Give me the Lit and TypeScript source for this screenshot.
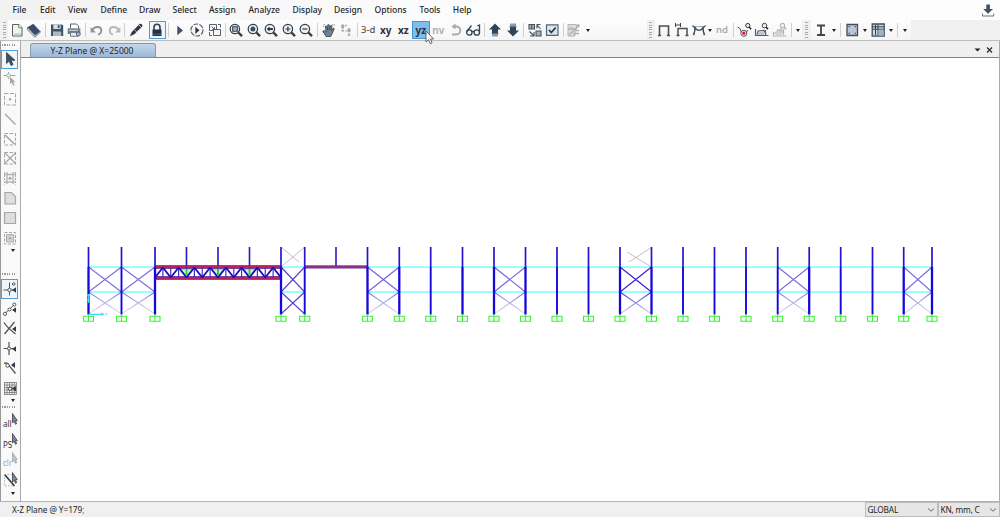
import { LitElement, html, svg, css } from "lit";
import { customElement } from "lit/decorators.js";

const N = "#343c47";
const G = "#a4a6a8";

const lens = (inner: unknown) => svg`
  <circle cx="6.9" cy="7" r="4.7" fill="#eceff2" stroke=${N} stroke-width="1.2"/>
  <path d="M10.4 10.5L14 14.1" stroke=${N} stroke-width="2.4"/>${inner}`;

const snap = (body: unknown) => svg`<g fill="none" stroke="#555" stroke-width="1">${body}</g>
  <path d="M10 9l4-2.8v5.6z" fill="#2c3d50"/>`;

const select = svg`<path d="M10.500 .5v9.500l1.700-1.700 1.300 3 1.200-.7-1.300-2.900h1.900z" fill="#7b8792" stroke="#34404c" stroke-width=".8"/>`;

const ICONS: Record<string, unknown> = {
  new: svg`<path d="M3.500 2.500h6.500l3 3v8.500h-9.500z" fill="#edf3ed" stroke="#59615d"/><path d="M9.700 2.500v3.300h3.300" fill="#fff" stroke="#59615d" stroke-width=".8"/><path d="M5 12.500h7" stroke="#b8cdbf" stroke-width="2"/>`,
  book: svg`<path d="M1.500 5.200L7.300 1.800l7 7.400-5.200 4.800z" fill="#3b4a67"/><path d="M1.500 5.200v2.600l7.300 7.500 5.500-4.900V9.200L9 13.200z" fill="#c3c8cf" stroke="#586476" stroke-width=".7"/>`,
  save: svg`<path d="M2 2.500h11l1.200 1.200v10.300H2z" fill="#425365"/><path d="M4.300 2.500h7.300v4.500H4.300z" fill="#d6dde3"/><path d="M8.800 3h1.700v3H8.800z" fill="#425365"/><path d="M4 9.500h8.200V14H4z" fill="#aeb8c3"/>`,
  print: svg`<path d="M4.500 6V2h6l2 2v2.500" fill="#fff" stroke="#56606d"/><path d="M1.700 6.300h12.600v5.700H1.700z" fill="#727f8f"/><path d="M3 8.300h9" stroke="#d8dde3"/><path d="M4.500 10.300h7.300v4H4.500z" fill="#e6eaee" stroke="#56606d" stroke-width=".8"/><circle cx="12.300" cy="12" r="2" fill="#a9b5c6" stroke="#465263" stroke-width=".8"/>`,
  undo: svg`<path d="M3 8.500C5.500 3.500 12.300 4 12.300 8.500c0 2.300-1.700 3.700-3.300 4" fill="none" stroke="#92969a" stroke-width="1.900"/><path d="M1.600 5v5.500h5.300z" fill="#92969a"/>`,
  redo: svg`<path d="M13 8.500C10.500 3.500 3.700 4 3.700 8.500c0 2.300 1.700 3.700 3.300 4" fill="none" stroke="#b5b8ba" stroke-width="1.900"/><path d="M14.400 5v5.500H9.100z" fill="#b5b8ba"/>`,
  pen: svg`<path d="M1.800 14.200l2-4.300L11.600 2c1.800-.6 3.200.7 2.600 2.500l-7.900 7.700z" fill="#2d3743"/><path d="M6.500 7.800l2 2M10.200 2.200l3.500 3.600" stroke="#d5dae0" stroke-width=".9"/>`,
  lock: svg`<path d="M5 8V5.300a3 3 0 0 1 6 0V8" fill="none" stroke="#333c4b" stroke-width="1.600"/><path d="M3.500 7.500h9v6.500h-9z" fill="#27313f"/><path d="M4 12.200h8" stroke="#596b82"/>`,
  run: svg`<path d="M5.300 3.800l5.700 4.700-5.700 4.700z" fill="#3f5068"/>`,
  runset: svg`<circle cx="8" cy="8" r="6" fill="none" stroke="#5a616a" stroke-width="1.200" stroke-dasharray="4.700 1.300"/><path d="M6.300 4.700l4.200 3.600-4.200 3.600z" fill="#2d3a49"/>`,
  alive: svg`<g fill="#f5f5f5" stroke="#59606a"><path d="M2.500 2.500h7v6h-7z"/><path d="M6.500 7.500h7v6h-7z"/></g><path d="M2.500 10v3.500h2.500M11 2.500h2.500v3M4.500 4.500l3 3m-2.200 0h2.200V5.300" fill="none" stroke="#59606a"/>`,
  zwin: lens(svg`<path d="M4.700 4.700h4.600v4.600H4.700z" fill="#aab4c0" stroke="#394450" stroke-width="1.100"/>`),
  zfull: lens(svg`<circle cx="6.900" cy="7" r="2.500" fill="#3d4d5c"/>`),
  zprev: lens(svg`<path d="M3.600 7l3-2.600v1.700h3.300v1.800H6.600v1.700z" fill="#2c3c4c"/>`),
  zin: lens(svg`<path d="M4.400 7h5M6.900 4.500v5" stroke=${N} stroke-width="1.200"/>`),
  zout: lens(svg`<path d="M4.400 7h5" stroke=${N} stroke-width="1.200"/>`),
  hand: svg`<path d="M2.500 5V2.500H5M11 2.500h2.500V5" fill="none" stroke="#aaa" stroke-dasharray="1.500 1"/><path d="M5 14.500L1.800 9.200l1.300-.7 2 1.700-.8-6 1.300-.3 1 4.100.2-5.200h1.400l.4 5 1.100-4.400 1.300.3-.6 5 1.700-2.600 1.200.6-2.200 5.100-1.300 2.700z" fill="#6f8193" stroke="#34414f" stroke-width=".8"/>`,
  feet: svg`<g fill="#a6a8aa"><ellipse cx="4.700" cy="4.500" rx="1.700" ry="2.200"/><ellipse cx="4.700" cy="8.700" rx="1.300" ry="1.100"/><ellipse cx="11" cy="8.300" rx="1.700" ry="2.200"/><ellipse cx="11" cy="12.700" rx="1.300" ry="1.300"/><circle cx="8" cy="3.500" r=".9"/><circle cx="8" cy="9" r=".8"/></g>`,
  rotate: svg`<path d="M5.500 4.500h2.800a4 4 0 0 1 0 8H4" fill="none" stroke="#aaa" stroke-width="1.900"/><path d="M7.500 1.500v6L3.500 4.500z" fill="#aaa"/>`,
  glasses: svg`<g fill="none" stroke="#374351" stroke-width="1.300"><circle cx="4.300" cy="10.500" r="2.700"/><circle cx="11.800" cy="10.500" r="2.700"/><path d="M7 10c.7-.8 1.400-.8 2.100 0M1.800 9.500L6.500 3.500M14.500 10.500V3l-2.200 1"/></g>`,
  up: svg`<path d="M8 1.500l6 6h-3V11H5V7.500H2z" fill="#2f4359"/><path d="M5 11h6v3.500H5z" fill="#8d9dae"/><path d="M4.500 11.500h7" stroke="#5d7187"/>`,
  down: svg`<path d="M5 1.500h6V5H5z" fill="#8d9dae"/><path d="M5 5h6v3.500h3l-6 6-6-6h3z" fill="#2f4359"/><path d="M4.500 4.700h7" stroke="#5d7187"/>`,
  shrink: svg`<g fill="#a9b3bf" stroke="#48525f" stroke-width="1.100"><path d="M2 2.500h5.500v4.500H2zM9 9h5v5H9z"/></g><path d="M4.700 2.500v4.500M9.500 2.500h4M10 2.500v4M10 3l3.500 4M2.500 9.500l4 4M3 14h4v-4" fill="none" stroke="#48525f" stroke-width="1.100"/>`,
  check: svg`<path d="M2.500 2.800h11.500v10.500H2.500z" fill="#dce4ed" stroke="#536579" stroke-width="1.200"/><path d="M5 8l2.300 2.500 4.400-5" fill="none" stroke="#27384a" stroke-width="1.700"/>`,
  assign: svg`<path d="M2 2.500h8.500v4.500H2zM2 7h7v7H2z" fill="#dcdddd" stroke="#b2b3b4"/><path d="M3 13L13 3.500M4.500 5l2 1.500M9 8.500h4M7 11.500h6" stroke="#b0b0b0" stroke-width="1.300"/><circle cx="12.500" cy="3.500" r="1.300" fill="#aaa"/>`,
  frame: svg`<path d="M2 13.500h3M11 13.500h3M3.500 13V4h9v9" fill="none" stroke="#4b4f54" stroke-width="1.600"/>`,
  frameload: svg`<path d="M2.500 13.500h3M11.500 13.500h3M4 13.500V6.500h9v7" fill="none" stroke="#4b4f54" stroke-width="1.500"/><path d="M1.500 1v4M1.500 3h5M6.500 1v4" fill="none" stroke="#3b4045"/>`,
  deform: svg`<path d="M3.500 13.500V4.500h9v9" fill="none" stroke="#a9adb2"/><path d="M1.500 3.500c1 2 2 1 2.300 2.500.5 2-.5 5-1.500 7M3.800 5c2 4.500 6.500 4.500 8.500 0M14.500 3.500c-1 2-2 1-2.300 2.500-.5 2 .5 5 1.500 7" fill="none" stroke="#405064" stroke-width="1.400"/>`,
  plot1: svg`<path d="M1.500 5l2.500 1.500L6 12h4l1.500-4" fill="none" stroke="#4d5a68"/><circle cx="7.800" cy="11.300" r="3" fill="#fff" stroke="#48505a"/><circle cx="7.800" cy="11.300" r="1.700" fill="#e31d37"/><circle cx="11.800" cy="3.500" r="2.100" fill="#e7edf3" stroke="#333"/><path d="M13.200 5.200l2 2" stroke="#222" stroke-width="1.500"/>`,
  plot2: svg`<path d="M1.500 7v6.500h13M3 12l1.500-3 5.500-.7 2 4M4 13V8.500M11.500 8v5.500" fill="none" stroke="#4f5f72" stroke-width="1.200"/><path d="M4 10h6v3H4z" fill="#bac5d1"/><circle cx="10.500" cy="3.600" r="2.300" fill="#e7edf3" stroke="#444"/><path d="M12.200 5.300l1.800 1.800" stroke="#222" stroke-width="1.500"/>`,
  plot3: svg`<path d="M1.500 10v4h13M3 12l2-3 4-1 3 4M6 7v6M9 6v7M11.500 7v6" fill="none" stroke="#b0b2b3" stroke-width="1.200"/><path d="M4 9h6v4H4z" fill="#d0d1d2"/><circle cx="10.500" cy="3.600" r="2.300" fill="#eee" stroke="#aaa"/><path d="M12.200 5.300l1.800 1.800" stroke="#aaa" stroke-width="1.500"/>`,
  ibeam: svg`<path d="M4 3.500h8M4 13h8M8 3.500V13" stroke="#41464b" stroke-width="1.800"/>`,
  rebar: svg`<path d="M3 2.500h10.500v11H3z" fill="#b9c6d6" stroke="#444d58" stroke-width="1.300"/><g fill="#445a78"><circle cx="5.200" cy="4.700" r=".8"/><circle cx="11.300" cy="4.700" r=".8"/><circle cx="5.200" cy="11.300" r=".8"/><circle cx="11.300" cy="11.300" r=".8"/></g>`,
  slab: svg`<path d="M2.200 2h12v12.200h-12z" fill="#cfd8e1" stroke="#444d58" stroke-width="1.300"/><path d="M5.500 2.500v11M8 2.500v11M2.500 4.800h11.500M2.500 7.200h11.500" stroke="#354354"/><path d="M8.500 7.700h5v5.800h-5z" fill="#a5b1c1"/>`,
  arrow: svg`<path d="M4.500 1.500v11l2.600-2.400 2 4.400 2-1-2-4.200H13z" fill="#3c5266" stroke="#26333f" stroke-width=".7"/>`,
  reshape: svg`<path d="M1.500 4.500h12M6.500 1v7" stroke=${G}/><circle cx="6.500" cy="4.500" r="1.700" fill="#fff" stroke=${G}/><path d="M8 6v7l1.700-1.500 1.400 3.200 1.400-.7-1.300-3h2.300z" fill=${G}/>`,
  point: svg`<path d="M2.500 2.500h11v11.500h-11z" fill="none" stroke=${G} stroke-dasharray="4 1.500"/><circle cx="8" cy="8.200" r="1.200" fill=${G}/>`,
  line: svg`<path d="M3 3l10.500 10.500" stroke=${G} stroke-width="1.400"/>`,
  region: svg`<path d="M2.500 2.500h11v11.500h-11z" fill="none" stroke=${G} stroke-dasharray="3.500 1.500"/><path d="M3 4l9.500 9" stroke=${G} stroke-width="1.600"/>`,
  brace: svg`<path d="M2.500 2.500h11v11.500h-11z" fill="none" stroke=${G} stroke-dasharray="3.500 1.500"/><path d="M2.500 2.500L14 14M14 2.500L2 14" stroke=${G} stroke-width="1.200"/>`,
  beams: svg`<path d="M2.500 2v12.500M13.500 2v12.500" fill="none" stroke=${G} stroke-dasharray="2 1"/><path d="M5 2v12M11 2v12M2 4.500h12M2 12h12" stroke="#b4b5b6" stroke-width="1.400"/><circle cx="8" cy="8.200" r="1.500" fill=${G}/>`,
  poly: svg`<path d="M3 2.500h6.500l4 4v7.500H3z" fill="#dedede" stroke=${G} stroke-width="1.200"/>`,
  rect: svg`<path d="M2.500 2.500h11v11h-11z" fill="#dedede" stroke=${G} stroke-width="1.200"/>`,
  area: svg`<path d="M2.500 2.500h11v11.500h-11z" fill="none" stroke=${G} stroke-dasharray="3 1.500"/><path d="M4.500 4.700h7.200v7.200H4.500z" fill="#d5d5d5" stroke=${G}/><circle cx="8" cy="8.200" r="1.300" fill="#aaa"/>`,
  snapjoint: snap(svg`<path d="M1.500 9h12M7.500 1.500v13"/><circle cx="7.500" cy="9" r="1.700" fill="#fff"/><circle cx="11.700" cy="3" r="1.300"/>`),
  snapmid: snap(svg`<path d="M3 12.500L12 4"/><circle cx="3" cy="12.800" r="1.600" fill="#fff"/><circle cx="7.500" cy="8.500" r="1.500" fill="#fff"/><circle cx="12.300" cy="3.500" r="1.500" fill="#fff"/>`),
  snapx: snap(svg`<path d="M2 2.500c3 5 7 8 11.500 11.500M12.500 2L2.500 14" stroke-width="1.300"/>`),
  snapperp: snap(svg`<path d="M1.500 8.500h12M7 2v13" stroke-width="1.200"/><circle cx="7" cy="8.500" r="1.600" fill="#fff"/>`),
  snapline: svg`<path d="M2 3.500c2-1 4-.5 5 2L13.500 13.500" fill="none" stroke="#555" stroke-width="1.300"/><circle cx="5.500" cy="5.500" r="1.700" fill="#fff" stroke="#555"/><path d="M9 5l4-3v6z" fill="#2c3d50"/>`,
  snapgrid: svg`<path d="M2 2.500h12.500M2 5h12.500M2 7.500h12.500M2 10h12.500M2 12.500h12.500M2 14.500h12.500M2.500 2v12.500M5 2v12.500M7.500 2v12.500M10 2v12.500M12.300 2v12.500M14.400 2v12.500" stroke="#777" stroke-width=".8"/><circle cx="8" cy="8.700" r="1.700" fill="#fff" stroke="#444"/><path d="M10 8.700l4-2.700v5.400z" fill="#2c3d50"/>`,
  all: svg`${select}<text x="1" y="14" class="lbl">all</text>`,
  ps: svg`${select}<text x="1" y="14.500" class="lbl">PS</text>`,
  clr: svg`<g opacity=".45">${select}<text x="1" y="14" class="lbl">clr</text></g>`,
  inter: svg`<path d="M2.500 2.500h7M2.500 2.500v11.500h9" fill="none" stroke="#aaa" stroke-dasharray="1.500 1.500"/><path d="M3 3l9.500 11" stroke="#333e49" stroke-width="1.700"/>${select}`,
  download: svg`<path d="M6.300 2.500h3.600v4.500H13l-4.900 4.700L3.200 7h3.100z" fill="#3f5165"/><path d="M2.500 11.500V14h11.200v-2.500" fill="none" stroke="#6a7580"/>`,
};

type Item = [kind: string, size: number, mod?: string];

const MENU: [string, number][] = [
  ["File", 27.5], ["Edit", 28], ["View", 32.500], ["Define", 38.5], ["Draw", 33.500],
  ["Select", 36.500], ["Assign", 39.500], ["Analyze", 44], ["Display", 41.500],
  ["Design", 40.500], ["Options", 45], ["Tools", 33.300], ["Help", 30],
];

const TOOLBAR: Item[] = [
  ["grip", 8], ["new", 17.5], ["book", 17.5], ["sep", 5], ["save", 17.5], ["print", 17.5],
  ["sep", 5], ["undo", 17], ["redo", 17], ["sep", 5], ["pen", 17.5], ["gap", 4],
  ["lock", 17.5, "on"], ["sep", 5], ["run", 17.5], ["runset", 17.5], ["alive", 17.5], ["sep", 4],
  ["zwin", 17.5], ["zfull", 17.5], ["zprev", 17.5], ["zin", 17.5], ["zout", 17.5], ["sep", 5],
  ["hand", 17.5], ["feet", 17.5], ["sep", 4.5],
  ["#3-d", 17.5, "soft"], ["#xy", 17.5], ["#xz", 17.5], ["#yz", 17.5, "active"], ["#nv", 17.5, "off"],
  ["rotate", 17.5], ["glasses", 17.5], ["sep", 4.5], ["up", 17.5], ["down", 17.5], ["sep", 4.5],
  ["shrink", 17.5], ["check", 17.5], ["sep", 4.5], ["assign", 17.5], ["caret", 9], ["gap", 54.5],
  ["grip", 8], ["frame", 18], ["frameload", 18], ["deform", 16], ["caret", 6], ["#nd", 19, "soft off"],
  ["sep", 4], ["plot1", 17.5], ["plot2", 18], ["plot3", 18], ["sep", 4], ["caret", 9],
  ["grip", 9], ["ibeam", 19], ["caret", 8.5], ["sep", 4.5], ["rebar", 17.5], ["caret", 8],
  ["slab", 18], ["caret", 9], ["sep", 4], ["caret", 10],
];

const SIDEBAR: Item[] = [
  ["grip", 8.5], ["arrow", 19.8, "on"], ["reshape", 19.8], ["point", 19.8], ["line", 19.8],
  ["region", 19.8], ["brace", 19.8], ["beams", 19.8], ["poly", 19.8], ["rect", 19.8],
  ["area", 19.8], ["caret", 6.5], ["gap", 16], ["grip", 9],
  ["snapjoint", 19.8, "on"], ["snapmid", 19.8], ["snapx", 19.8], ["snapperp", 19.8],
  ["snapline", 19.8], ["snapgrid", 19.8], ["caret", 5.5], ["grip", 8],
  ["all", 19.7], ["ps", 19.7], ["clr", 19.7], ["inter", 19.7], ["caret", 7],
];

// Elevation levels and column lines of the frame model
const TOP = 247, EAVE = 267, GIRT = 292, BASE = 314;
const THICK = [88.5, 155, 281, 367.5, 399.3, 462.5, 494, 525.5, 620, 651.5, 809, 904, 932];
const COLS = [88.5, 121.5, 155, 281, 304.7, 367.5, 399.3, 430.7, 462.5, 494, 525.5, 557, 588.500,
  620, 651.500, 683, 714.500, 746, 777.700, 809.200, 840.700, 872.500, 903.700, 932];
const BAYS: [number, number, number][] = [
  [88.5, 121.5, 0.65], [121.5, 155, 0.65], [281, 304.7, 0.85], [367.5, 399.3, 0.7],
  [494, 525.5, 0.7], [620, 651.5, 1], [777.7, 809.2, 0.65], [903.7, 932, 0.65],
];
const GIRTS: [number, number][] = [[88.5, 155], [281, 304.7], [367.5, 932]];

@customElement("app-root")
export class AppRoot extends LitElement {
  static styles = css`
    :host { display: block; width: 1000px; height: 517px; overflow: hidden;
      font-family: "Noto Sans", "Open Sans", sans-serif; font-size: 8.5px; color: #1f1f26; }
    .app { height: 100%; display: flex; flex-direction: column; background: #f0f0f0; position: relative; }
    .menu { flex: 0 0 20px; display: flex; align-items: center; padding: 0 4px 0 12.5px;
      background: linear-gradient(90deg, #f2f2f2, #fdfdfd 50%, #fdfdfd); }
    .menu span { flex: none; line-height: 20px; font-weight: 500; }
    .menu svg { margin-left: auto; }
    .tools { flex: 0 0 21px; min-height: 0; height: 21px; display: flex; background: #f0f0f0;
      border-bottom: 1px solid #bdbdbd; box-sizing: border-box; }
    .strip { display: flex; background: linear-gradient(#fdfdfd, #f5f5f5); flex: 0 0 911px; }
    .item { flex: none; display: flex; align-items: center; justify-content: center; box-sizing: border-box; }
    .side .item { width: 17px; }
    svg { display: block; flex: none; }
    .on { border: 1px solid #4f9fd6; background: #eef6fc; }
    .strip .on { height: 18px; margin-top: 1px; }
    .side .on { background-clip: padding-box; }
    .word { font-weight: 700; font-size: 10px; line-height: 16px; padding-bottom: 1px; color: #2e3238; }
    .soft { font-weight: 500; font-size: 9.5px; color: #555; }
    .off { color: #a9a9a9; font-weight: 600; }
    .active { background: #7fbdeb; border: 1px solid #4297d6; height: 18px; margin-top: 1px; line-height: 14px; }
    .sep::before { content: ""; width: 1px; height: 14px; background: #cfcfcf; }
    .caret::before { content: ""; border: 2.5px solid transparent; border-top: 3px solid #222; border-bottom: 0; }
    .strip .grip::before { content: ""; width: 3px; height: 16px;
      background: repeating-linear-gradient(#aaa 0 1px, transparent 1px 2.5px); }
    .strip .grip { background: #f0f0f0; }
    .side .grip::before { content: ""; width: 15px; height: 2px;
      background: repeating-linear-gradient(90deg, #999 0 1px, transparent 1px 2.5px); }
    .side .caret { justify-content: flex-end; padding-right: 3px; }
    .lbl { font: 8px "Noto Sans", sans-serif; fill: #333; }
    .body { flex: 1; display: flex; min-height: 0; }
    .side { flex: 0 0 21px; box-sizing: border-box; display: flex; flex-direction: column; align-items: flex-start;
      border-left: 1px solid #999; border-right: 1px solid #aaa; background: #f9f9f9; }
    .work { flex: 1; display: flex; flex-direction: column; min-width: 0; border-right: 1px solid #aaa; background: #fff; }
    .tabs { flex: 0 0 17px; box-sizing: border-box; display: flex; align-items: flex-end; padding: 0 5px 0 9px;
      border-bottom: 1px solid #858585; background: #efefef; }
    .tab { width: 126px; height: 14px; box-sizing: border-box; border: 1px solid #8b98a9; border-bottom: 0;
      border-radius: 3px 3px 0 0; background: linear-gradient(#c4d6ea, #9cb8da); text-align: center;
      line-height: 13px; font-size: 8.5px; padding-right: 2px; white-space: nowrap; }
    .tabs svg { margin-left: auto; }
    .status { flex: 0 0 16px; display: flex; align-items: center; box-sizing: border-box; border-top: 1px solid #b2b2b2;
      padding-left: 12px; font-size: 8.3px; white-space: nowrap; }
    .msg { flex: 1; letter-spacing: -0.08px; }
    .msg b { font-weight: 400; color: #2376a5; }
    .pick { display: flex; align-items: center; justify-content: space-between; box-sizing: border-box; height: 15px;
      border: 1px solid #bbb; background: #e6e6e6; padding: 0 2px 0 1.5px; letter-spacing: -0.2px; }
    .cs { width: 73px; }
    .units { width: 62px; }
    .cursor { position: absolute; left: 425px; top: 30px; }
  `;

  icon(name: string) {
    return html`<svg width="16" height="16" viewBox="0 0 16 16">${ICONS[name]}</svg>`;
  }

  item([kind, size, mod]: Item, axis: string) {
    const plain = ["sep", "grip", "caret", "gap"].includes(kind);
    const word = kind.startsWith("#");
    return html`<div class="item ${plain ? kind : ""} ${word ? "word" : ""} ${mod ?? ""}"
      style="${axis}:${size}px">${plain ? "" : word ? kind.slice(1) : this.icon(kind)}</div>`;
  }

  model() {
    const cross = (a: number, b: number, y1: number, y2: number, o: number, fade = false) => svg`
      <path d="M${a} ${y1}L${b} ${y2}M${b} ${y1}L${a} ${y2}" stroke=${fade ? "url(#fade)" : "#3a1ccc"} stroke-width="1.1" opacity=${o}/>`;
    const step = 126 / 16;
    const nodes = Array.from({ length: 16 }, (_, i) => 155 + i * step);
    const webs = nodes.map((x, i) => i % 2
      ? `M${x} 267.5L${x + step} 277.5` : `M${x} 277.5L${x + step} 267.5`).join("");
    const posts = nodes.map(x => `M${x} 267V278`).join("");
    return svg`
      <defs><linearGradient id="fade" gradientUnits="userSpaceOnUse" x1="0" y1="292" x2="0" y2="315">
        <stop offset="0" stop-color="#4a2cd0"/><stop offset="1" stop-color="#b7a4d8" stop-opacity=".5"/></linearGradient></defs>
      <g fill="none">
        ${GIRTS.map(([a, b]) => svg`<path d="M${a} ${EAVE}H${b}M${a} ${GIRT}H${b}" stroke="#7dfbfb" stroke-width="1.300"/>`)}
        ${BAYS.map(([a, b, o]) => [cross(a, b, EAVE, GIRT, o), cross(a, b, GIRT, BASE, o, a !== 281)])}
        <path d="M281 247L299 262M304.700 247L281 267" stroke="#c3a2ce" stroke-width=".8"/>
        <path d="M651.500 247.500L629 262M651.500 267L627 252" stroke="#bda9bd" stroke-width=".8"/>
        <path d="M186.500 247V267M218 247V267M249.500 247V267M336 247V267" stroke="#2718c4" stroke-width="1.600"/>
        ${[186.5, 218, 249.5].map(x => svg`<path d="M${x - 6} 269l6 7 6-7z" fill="#a9f5b4" fill-opacity=".7" stroke="#48b887" stroke-width=".7"/>`)}
        <path d="M155 266.900H281M155 278H281" stroke="#cb2058" stroke-width="3"/>
        <path d="M155 265.700H281M155 268.400H281M155 276.600H281M155 279.300H281" stroke="#61208f" stroke-width=".8"/>
        <path d=${posts} stroke="#3a34d2" stroke-width="1.200"/>
        <path d=${webs} stroke="#1b10bd" stroke-width="1.900"/>
        ${[186.5, 218, 249.5].map(x => svg`<path d="M${x} 269v7" stroke="#21d63f" stroke-width="1.600"/>`)}
        <path d="M304.700 266.900H367.500" stroke="#96327c" stroke-width="2.700"/>
        <path d="M304.700 265.900H367.500M304.700 268.100H367.500" stroke="#6333aa" stroke-width=".6"/>
        ${COLS.map(x => {
          const wide = THICK.some(t => Math.abs(t - x) < 1);
          return svg`<path d="M${x} ${TOP}V${EAVE}" stroke="#2516ce" stroke-width="1.700"/>
            <path d="M${x} ${EAVE}V${BASE + .5}" stroke="#1707d8" stroke-width=${wide ? 2.3 : 1.9}/>
            <path d="M${x - 5} 316.300h10v5h-10zM${x} 314.500v7" stroke="#35f531" stroke-width="1.100"/>`;
        })}
        <path d="M88.500 294v9M88.500 314.300h14" stroke="#38d9fa" stroke-width="1.200"/>
        <path d="M87 296l1.500-2 1.500 2M87 300h3M101 313l3 1.300-3 1.300M105 314h2.500" stroke="#48dff8"/>
      </g>`;
  }

  render() {
    const chev = html`<svg width="8" height="6" viewBox="0 0 8 6"><path d="M1 1.500l3 2.700 3-2.700" fill="none" stroke="#666" stroke-width="1"/></svg>`;
    return html`<div class="app">
      <div class="menu">
        ${MENU.map(([t, w]) => html`<span style="width:${w}px">${t}</span>`)}
        ${this.icon("download")}
      </div>
      <div class="tools"><div class="strip">${TOOLBAR.map(i => this.item(i, "width"))}</div></div>
      <div class="body">
        <div class="side">${SIDEBAR.map(i => this.item(i, "height"))}</div>
        <div class="work">
          <div class="tabs">
            <div class="tab">Y-Z Plane @ X=25000</div>
            <svg width="20" height="14" viewBox="0 0 20 14"><path d="M.5 5.500h6l-3 3z" fill="#222"/><path d="M13 4.500l5 5M18 4.500l-5 5" stroke="#333" stroke-width="1.400"/></svg>
          </div>
          <svg width="978" height="443" viewBox="21 58 978 443">${this.model()}</svg>
        </div>
      </div>
      <div class="status">
        <div class="msg">X-Z Plane @ Y=179<b>;</b></div>
        <div class="pick cs">GLOBAL${chev}</div>
        <div class="pick units">KN, mm, C${chev}</div>
      </div>
      <svg class="cursor" width="10" height="15" viewBox="0 0 10 15"><path d="M1 1v11l2.500-2.300 1.800 4 1.800-.8-1.800-3.900h3.300z" fill="#fff" stroke="#555" stroke-width=".9"/></svg>
    </div>`;
  }
}
